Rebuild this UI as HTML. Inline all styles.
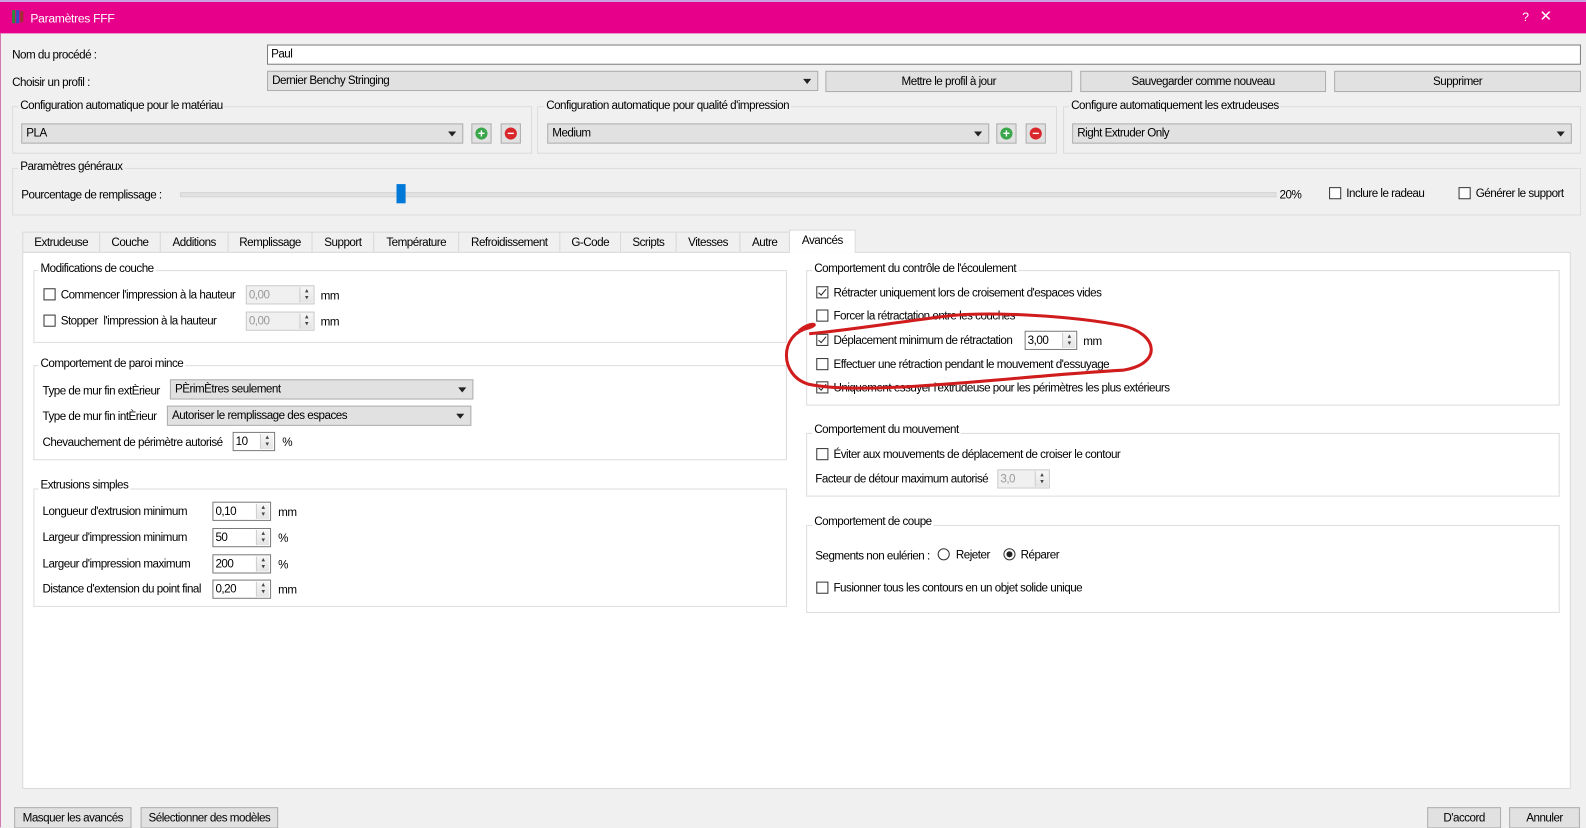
<!DOCTYPE html>
<html><head><meta charset="utf-8"><style>
html,body{margin:0;padding:0;width:1586px;height:827px;overflow:hidden;background:#f0f0f0}
#w{position:absolute;left:0;top:0;width:1568px;height:818px;transform:scale(1.01148);transform-origin:0 0;font-family:"Liberation Sans",sans-serif;font-size:11.5px;color:#000;letter-spacing:-0.5px}
.a{position:absolute;white-space:nowrap}
.t{margin-top:1px}
.title{left:0;top:0;width:1568px;height:33px;background:#e6008a;color:#fff;border-top:2px solid #c9a0e0;box-sizing:border-box}
.inp{background:#fff;border:1px solid #7a7a7a;box-sizing:border-box;padding-left:3px;line-height:19px}
.cmb{background:#e1e1e1;border:1px solid #adadad;box-sizing:border-box;padding-left:4px;line-height:19px}
.cmb:after{content:"";position:absolute;right:6px;top:7px;border-left:4px solid transparent;border-right:4px solid transparent;border-top:5px solid #222}
.btn{background:#e1e1e1;border:1px solid #adadad;box-sizing:border-box;text-align:center;line-height:20px}
.grp{border:1px solid #dcdcdc;box-sizing:border-box}
.gl{background:#f0f0f0;padding:0 2px}
.cb{width:12px;height:12px;border:1px solid #333;background:#fff;box-sizing:border-box}
.cb.c:after{content:"";position:absolute;left:3px;top:0px;width:3px;height:7px;border:solid #222;border-width:0 1.5px 1.5px 0;transform:rotate(40deg)}
.spin{background:#fff;border:1px solid #7a7a7a;box-sizing:border-box;padding-left:2px;line-height:18px}
.spin.d{background:#f0f0f0;border-color:#ccc;color:#999}
.spin:after{content:"▴\A▾";white-space:pre;font-size:7px;line-height:7px;text-align:center;color:#444;position:absolute;right:1px;top:1px;width:12px;height:15px;border-left:1px solid #ccc;background:linear-gradient(#f6f6f6,#e4e4e4)}
.ic{width:20px;height:20px;border:1px solid #adadad;background:#e1e1e1;box-sizing:border-box}
.ic i{position:absolute;left:3px;top:3px;width:12px;height:12px;border-radius:50%;color:#fff;font-style:normal;font-weight:bold;font-size:12px;line-height:12px;text-align:center;letter-spacing:0}
.tab{top:229px;height:21px;border:1px solid #d9d9d9;background:#f0f0f0;box-sizing:border-box;text-align:center;line-height:20px}
.rad{width:12px;height:12px;border:1px solid #333;border-radius:50%;background:#fff;box-sizing:border-box}
</style></head><body><div id="w">
<div class="a title"><div class="a" style="left:12px;top:8px;width:3px;height:13px;background:#2a8a3a"></div><div class="a" style="left:16px;top:8px;width:3px;height:13px;background:#3050c0"></div><div class="a" style="left:20px;top:9px;width:3px;height:11px;background:#a03030"></div>
<div class="a" style="left:30px;top:9px;font-size:12px;letter-spacing:-0.3px">Paramètres FFF</div>
<div class="a" style="left:1505px;top:8px;font-size:12px">?</div><div class="a" style="left:1522px;top:5px;font-size:15px">✕</div></div>
<div class="a" style="left:0;top:33px;width:1px;height:785px;background:#d07ab0"></div>

<div class="a t" style="left:12px;top:48px">Nom du procédé :</div>
<div class="a inp" style="left:264px;top:44px;width:1299px;height:20px">Paul</div>
<div class="a t" style="left:12px;top:75px">Choisir un profil :</div>
<div class="a cmb" style="left:264px;top:70px;width:545px;height:20px">Dernier Benchy Stringing</div>
<div class="a btn" style="left:816px;top:70px;width:244px;height:21px">Mettre le profil à jour</div>
<div class="a btn" style="left:1068px;top:70px;width:243px;height:21px">Sauvegarder comme nouveau</div>
<div class="a btn" style="left:1319px;top:70px;width:244px;height:21px">Supprimer</div>

<div class="a grp" style="left:12px;top:105px;width:514px;height:47px"></div>
<div class="a gl t" style="left:18px;top:98px">Configuration automatique pour le matériau</div>
<div class="a cmb" style="left:21px;top:122px;width:437px;height:20px">PLA</div>
<div class="a ic" style="left:466px;top:122px"><i style="background:#3aa64a">+</i></div>
<div class="a ic" style="left:495px;top:122px"><i style="background:#d8262b">−</i></div>
<div class="a grp" style="left:531px;top:105px;width:514px;height:47px"></div>
<div class="a gl t" style="left:538px;top:98px">Configuration automatique pour qualité d'impression</div>
<div class="a cmb" style="left:541px;top:122px;width:437px;height:20px">Medium</div>
<div class="a ic" style="left:985px;top:122px"><i style="background:#3aa64a">+</i></div>
<div class="a ic" style="left:1014px;top:122px"><i style="background:#d8262b">−</i></div>
<div class="a grp" style="left:1051px;top:105px;width:512px;height:47px"></div>
<div class="a gl t" style="left:1057px;top:98px">Configure automatiquement les extrudeuses</div>
<div class="a cmb" style="left:1060px;top:122px;width:494px;height:20px">Right Extruder Only</div>

<div class="a grp" style="left:12px;top:166px;width:1551px;height:47px"></div>
<div class="a gl t" style="left:18px;top:158px">Paramètres généraux</div>
<div class="a t" style="left:21px;top:186px">Pourcentage de remplissage :</div>
<div class="a" style="left:178px;top:190px;width:1082px;height:3px;background:#e3e3e3;border:1px solid #d5d5d5"></div>
<div class="a" style="left:392px;top:182px;width:9px;height:19px;background:#0078d7"></div>
<div class="a t" style="left:1265px;top:186px">20%</div>
<div class="a cb" style="left:1314px;top:185px"></div><div class="a t" style="left:1331px;top:185px">Inclure le radeau</div>
<div class="a cb" style="left:1442px;top:185px"></div><div class="a t" style="left:1459px;top:185px">Générer le support</div>

<div class="a" style="left:22px;top:249px;width:1531px;height:531px;background:#fff;border:1px solid #d9d9d9;box-sizing:border-box"></div>
<div class="a tab" style="left:22px;width:77px">Extrudeuse</div>
<div class="a tab" style="left:98px;width:61px">Couche</div>
<div class="a tab" style="left:158px;width:68px">Additions</div>
<div class="a tab" style="left:225px;width:84px">Remplissage</div>
<div class="a tab" style="left:308px;width:62px">Support</div>
<div class="a tab" style="left:369px;width:85px">Température</div>
<div class="a tab" style="left:453px;width:101px">Refroidissement</div>
<div class="a tab" style="left:553px;width:61px">G-Code</div>
<div class="a tab" style="left:613px;width:56px">Scripts</div>
<div class="a tab" style="left:668px;width:64px">Vitesses</div>
<div class="a tab" style="left:731px;width:50px">Autre</div>
<div class="a tab" style="left:780px;top:227px;width:66px;height:23px;background:#fff;border-bottom:none">Avancés</div>

<div class="a grp" style="left:33px;top:267px;width:745px;height:72px"></div>
<div class="a gl t" style="left:38px;top:259px;background:#fff">Modifications de couche</div>
<div class="a cb" style="left:43px;top:285px"></div><div class="a t" style="left:60px;top:285px">Commencer l'impression à la hauteur</div>
<div class="a spin d" style="left:243px;top:282px;width:68px;height:19px">0,00</div><div class="a t" style="left:317px;top:286px">mm</div>
<div class="a cb" style="left:43px;top:311px"></div><div class="a t" style="left:60px;top:311px">Stopper &nbsp;l'impression à la hauteur</div>
<div class="a spin d" style="left:243px;top:308px;width:68px;height:19px">0,00</div><div class="a t" style="left:317px;top:312px">mm</div>

<div class="a grp" style="left:33px;top:361px;width:745px;height:94px"></div>
<div class="a gl t" style="left:38px;top:353px;background:#fff">Comportement de paroi mince</div>
<div class="a t" style="left:42px;top:380px">Type de mur fin extÈrieur</div>
<div class="a cmb" style="left:168px;top:375px;width:300px;height:20px">PÈrimÈtres seulement</div>
<div class="a t" style="left:42px;top:405px">Type de mur fin intÈrieur</div>
<div class="a cmb" style="left:165px;top:401px;width:301px;height:20px">Autoriser le remplissage des espaces</div>
<div class="a t" style="left:42px;top:431px">Chevauchement de périmètre autorisé</div>
<div class="a spin" style="left:230px;top:427px;width:42px;height:19px">10</div><div class="a t" style="left:279px;top:431px">%</div>

<div class="a grp" style="left:33px;top:483px;width:745px;height:117px"></div>
<div class="a gl t" style="left:38px;top:473px;background:#fff">Extrusions simples</div>
<div class="a t" style="left:42px;top:499px">Longueur d'extrusion minimum</div>
<div class="a spin" style="left:210px;top:496px;width:58px;height:19px">0,10</div><div class="a t" style="left:275px;top:500px">mm</div>
<div class="a t" style="left:42px;top:525px">Largeur d'impression minimum</div>
<div class="a spin" style="left:210px;top:522px;width:58px;height:19px">50</div><div class="a t" style="left:275px;top:526px">%</div>
<div class="a t" style="left:42px;top:551px">Largeur d'impression maximum</div>
<div class="a spin" style="left:210px;top:548px;width:58px;height:19px">200</div><div class="a t" style="left:275px;top:552px">%</div>
<div class="a t" style="left:42px;top:576px">Distance d'extension du point final</div>
<div class="a spin" style="left:210px;top:573px;width:58px;height:19px">0,20</div><div class="a t" style="left:275px;top:577px">mm</div>

<div class="a grp" style="left:797px;top:267px;width:745px;height:134px"></div>
<div class="a gl t" style="left:803px;top:259px;background:#fff">Comportement du contrôle de l'écoulement</div>
<div class="a cb c" style="left:807px;top:283px"></div><div class="a t" style="left:824px;top:283px">Rétracter uniquement lors de croisement d'espaces vides</div>
<div class="a cb" style="left:807px;top:306px"></div><div class="a t" style="left:824px;top:306px">Forcer la rétractation entre les couches</div>
<div class="a cb c" style="left:807px;top:330px"></div><div class="a t" style="left:824px;top:330px">Déplacement minimum de rétractation</div>
<div class="a spin" style="left:1013px;top:327px;width:52px;height:19px">3,00</div><div class="a t" style="left:1071px;top:331px">mm</div>
<div class="a cb" style="left:807px;top:354px"></div><div class="a t" style="left:824px;top:354px">Effectuer une rétraction pendant le mouvement d'essuyage</div>
<div class="a cb c" style="left:807px;top:377px"></div><div class="a t" style="left:824px;top:377px">Uniquement essuyer l'extrudeuse pour les périmètres les plus extérieurs</div>

<div class="a grp" style="left:797px;top:428px;width:745px;height:63px"></div>
<div class="a gl t" style="left:803px;top:418px;background:#fff">Comportement du mouvement</div>
<div class="a cb" style="left:807px;top:443px"></div><div class="a t" style="left:824px;top:443px">Éviter aux mouvements de déplacement de croiser le contour</div>
<div class="a t" style="left:806px;top:467px">Facteur de détour maximum autorisé</div>
<div class="a spin d" style="left:986px;top:464px;width:52px;height:19px">3,0</div>

<div class="a grp" style="left:797px;top:519px;width:745px;height:87px"></div>
<div class="a gl t" style="left:803px;top:509px;background:#fff">Comportement de coupe</div>
<div class="a t" style="left:806px;top:543px">Segments non eulérien :</div>
<div class="a rad" style="left:927px;top:542px"></div><div class="a t" style="left:945px;top:542px">Rejeter</div>
<div class="a rad" style="left:992px;top:542px"><div class="a" style="left:2px;top:2px;width:6px;height:6px;border-radius:50%;background:#222"></div></div><div class="a t" style="left:1009px;top:542px">Réparer</div>
<div class="a cb" style="left:807px;top:575px"></div><div class="a t" style="left:824px;top:575px">Fusionner tous les contours en un objet solide unique</div>

<svg class="a" style="left:0;top:0" width="1568" height="818"><path d="M790 327 C 800 318, 812 320, 800 324 C 770 330, 770 372, 800 380 C 860 392, 1000 372, 1110 366 C 1150 360, 1145 330, 1110 322 C 1060 312, 980 308, 940 312 C 890 318, 850 325, 800 330" fill="none" stroke="#d01c1c" stroke-width="3"/></svg>

<div class="a btn" style="left:14px;top:798px;width:116px;height:21px">Masquer les avancés</div>
<div class="a btn" style="left:139px;top:798px;width:136px;height:21px">Sélectionner des modèles</div>
<div class="a btn" style="left:1411px;top:798px;width:73px;height:21px">D'accord</div>
<div class="a btn" style="left:1492px;top:798px;width:70px;height:21px">Annuler</div>
</div></body></html>
